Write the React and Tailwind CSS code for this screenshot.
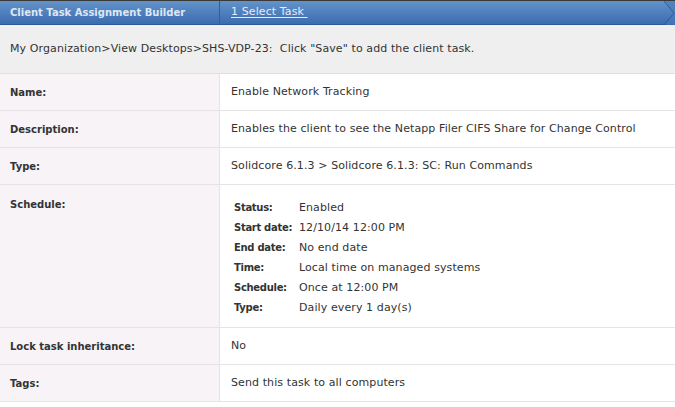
import React from "react";

const rows = [
  { label: "Name:", value: "Enable Network Tracking" },
  {
    label: "Description:",
    value: "Enables the client to see the Netapp Filer CIFS Share for Change Control",
  },
  { label: "Type:", value: "Solidcore 6.1.3 > Solidcore 6.1.3: SC: Run Commands" },
  { label: "Schedule:", schedule: true },
  { label: "Lock task inheritance:", value: "No" },
  { label: "Tags:", value: "Send this task to all computers" },
];

const schedule = [
  ["Status:", "Enabled"],
  ["Start date:", "12/10/14 12:00 PM"],
  ["End date:", "No end date"],
  ["Time:", "Local time on managed systems"],
  ["Schedule:", "Once at 12:00 PM"],
  ["Type:", "Daily every 1 day(s)"],
];

const App = () => {
  return (
    <div className="w-[675px] h-[407px] bg-white overflow-hidden font-['DejaVu_Sans',sans-serif] text-[11px] tracking-[0.1px] text-[#333]">
      {/* Header */}
      <div className="h-px bg-[#3a3a3a]" />
      <div className="relative flex h-[24px] bg-gradient-to-b from-[#6493c9] to-[#3b6cb0] border-b border-[#2c5a98]">
        <div className="w-[220px] border-r border-[#2f5f9f] pl-[10px] flex items-center font-bold text-[10px] tracking-normal text-[#dde7f4]">
          Client Task Assignment Builder
        </div>
        <div className="pl-[11px] flex items-center text-[#e4ecf7] underline underline-offset-2">
          1 Select Task&nbsp;
        </div>
        <svg
          className="absolute right-0 top-0"
          width="12"
          height="24"
          viewBox="0 0 12 24"
        >
          <path d="M1 0 L11 12 L1 24" fill="none" stroke="#2c5a98" strokeWidth="1" />
          <path d="M2 0 L12 12 L2 24 L12 24 L12 0 Z" fill="#4a7ab8" opacity="0.6" />
        </svg>
      </div>

      {/* Breadcrumb */}
      <div className="h-[49px] bg-[#efefef] border-b border-[#e0e0e0] pl-[10px] flex items-center">
        My Organization&gt;View Desktops&gt;SHS-VDP-23:&nbsp; Click "Save" to add the client task.
      </div>

      {/* Detail table */}
      <div className="flex flex-col">
        {rows.map((row) => (
          <div key={row.label} className="flex border-b border-[#e4e4e4]">
            <div
              className={`w-[220px] shrink-0 bg-[#f7f3f7] border-r border-[#e6e2e6] pl-[10px] font-bold text-[10px] tracking-normal ${
                row.schedule ? "pt-[12px] h-[142px]" : "h-[36px] flex items-center"
              }`}
            >
              {row.label}
            </div>
            {row.schedule ? (
              <div className="pl-[14px] pt-[15px] flex flex-col gap-[6px]">
                {schedule.map(([k, v]) => (
                  <div key={k} className="flex h-[14px] items-baseline">
                    <span className="w-[65px] font-bold text-[10px] tracking-[-0.3px]">{k}</span>
                    <span>{v}</span>
                  </div>
                ))}
              </div>
            ) : (
              <div className="pl-[11px] pt-px flex items-center">{row.value}</div>
            )}
          </div>
        ))}
      </div>
    </div>
  );
};

export default App;
